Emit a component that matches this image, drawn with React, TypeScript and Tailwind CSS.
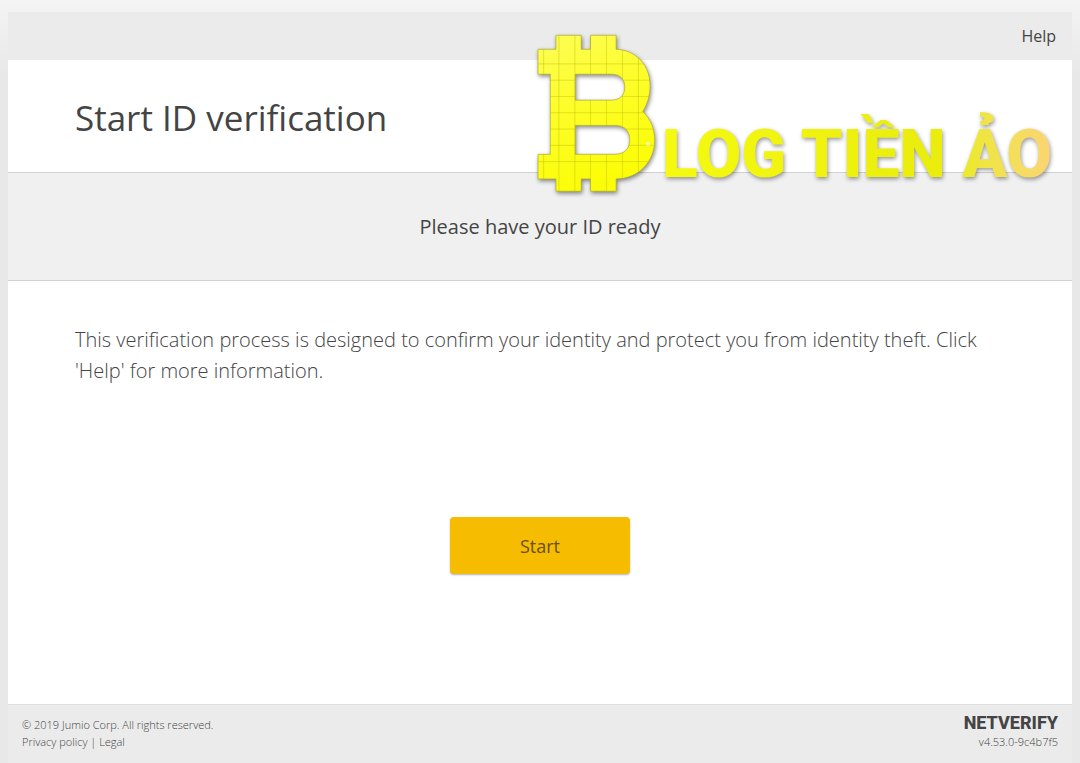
const coinPath =
    "M49 88H103V46H179V88H207V46H284V88C342 90 386 134 386 196C386 228 378 254 364 275C387 297 400 326 400 362C400 425 352 478 284 478V515H207V478H179V515H103V478H49V404H86V163H49ZM161 163V241H270C298 241 310 224 310 202C310 179 298 163 270 163ZM161 317V404H280C311 404 325 386 325 360C325 334 311 317 280 317Z";
const gridX = [66, 112, 160, 207, 255, 303, 351];
const gridY = [132, 181, 230, 279, 328, 377, 426];

function CoinMark() {
    return (
        <svg viewBox="40 36 370 490" className="w-[123px] shrink-0 drop-shadow-[1px_2px_2px_rgba(0,0,0,0.45)]" aria-hidden="true">
            <defs>
                <linearGradient id="coin-fill" x1="0" y1="0" x2="0.3" y2="1">
                    <stop offset="0" stopColor="#fdfd58" />
                    <stop offset="0.45" stopColor="#fdfd2c" />
                    <stop offset="1" stopColor="#fbfd08" />
                </linearGradient>
                <clipPath id="coin-shape">
                    <path clipRule="evenodd" d={coinPath} />
                </clipPath>
            </defs>
            <path fill="url(#coin-fill)" fillRule="evenodd" stroke="#aaa82c" strokeWidth="2" d={coinPath} />
            <g clipPath="url(#coin-shape)" stroke="#b4b400" strokeOpacity="0.38" strokeWidth="3">
                {gridX.map((x) => (
                    <line key={x} x1={x} x2={x} y1="40" y2="520" />
                ))}
                {gridY.map((y) => (
                    <line key={y} x1="40" x2="410" y1={y} y2={y} />
                ))}
            </g>
            <circle cx="380" cy="373" r="7" fill="#fff" fillOpacity="0.5" />
        </svg>
    );
}

function BlogLogo() {
    return (
        <div className="absolute top-8 right-7 flex items-end gap-1 pointer-events-none">
            <CoinMark />
            <p className="whitespace-nowrap bg-linear-to-r from-[#f5fa10] via-[#e9ec0c] via-75% to-[#fbd473] bg-clip-text pt-5 font-['Roboto',sans-serif] text-[66px] leading-[80px] font-black text-transparent drop-shadow-[1px_2px_2px_rgba(0,0,0,0.4)]">
                LOG TIỀN ẢO
            </p>
        </div>
    );
}

export default function App() {
    return (
        <div className="relative flex min-h-screen flex-col bg-linear-to-b from-[#f4f4f4] to-[#e8e8e8] to-10% px-2 pt-3 font-['Open_Sans','Noto_Sans',sans-serif] text-[#444]">
            <header className="flex h-12 items-center justify-end bg-[#ebebeb] px-4">
                <a href="#help" className="text-base">Help</a>
            </header>

            <main className="flex flex-1 flex-col bg-white">
                <div className="px-[67px] pt-[34px] pb-[30px]">
                    <h1 className="text-[35px] leading-[48px] font-normal">Start ID verification</h1>
                </div>
                <div className="border-y border-[#d2d2d2] bg-[#f0f0f0] pt-[38px] pb-[37px] text-center">
                    <h2 className="text-xl leading-8 font-normal">Please have your ID ready</h2>
                </div>
                <div className="flex flex-col px-[67px] pt-[43px] pb-32">
                    <p className="text-xl leading-[31px] font-light">
                        This verification process is designed to confirm your identity and protect you from identity theft. Click 'Help' for more information.
                    </p>
                    <button
                        type="button"
                        className="mt-[131px] h-[57px] w-[180px] self-center rounded-sm bg-[#f5bc00] text-lg text-[#6b5010] shadow-[0_1px_2px_rgba(0,0,0,0.3)]"
                    >
                        Start
                    </button>
                </div>
            </main>

            <footer className="flex items-start justify-between border-t border-[#dedede] bg-[#ebebeb] px-3.5 pt-2 pb-[13px]">
                <div className="pt-[3px] text-[11px] leading-[17px] font-light">
                    <p>© 2019 Jumio Corp. All rights reserved.</p>
                    <p>
                        <a href="#privacy">Privacy policy</a> | <a href="#legal">Legal</a>
                    </p>
                </div>
                <div className="text-right">
                    <p className="font-['Roboto',sans-serif] text-lg leading-5 font-extrabold">NETVERIFY</p>
                    <p className="text-[11px] leading-[17px] font-light">v4.53.0-9c4b7f5</p>
                </div>
            </footer>

            <BlogLogo />
        </div>
    );
}
